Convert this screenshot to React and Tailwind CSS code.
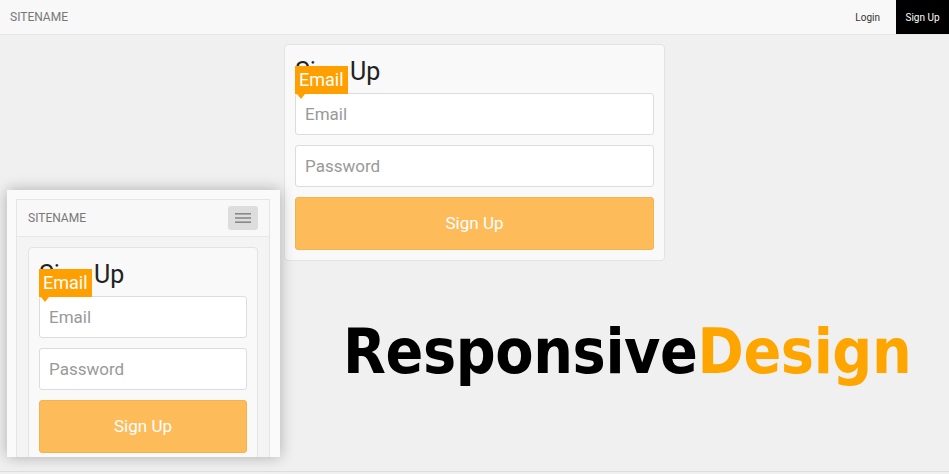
import { useState } from "react";

function Tooltip({ label }) {
  return (
    <div className="absolute left-0 top-[-27px] z-10 h-[28px] bg-[#ffa000] px-[4px] text-[18px] leading-[28px] text-white">
      {label}
      <span className="absolute left-[2px] top-full h-0 w-0 border-x-[4px] border-t-[5px] border-x-transparent border-t-[#ffa000]" />
    </div>
  );
}

function SignUpForm() {
  const [email, setEmail] = useState("");
  const [password, setPassword] = useState("");

  return (
    <div className="rounded-[4px] border border-[#e3e3e3] bg-[#f9f9f9] px-[10px] pb-[10px] pt-[11px]">
      <h1 className="mb-[5px] text-[25px] leading-[32px] text-[#222]">Sign Up</h1>
      <div className="relative">
        <Tooltip label="Email" />
        <input
          value={email}
          onChange={(e) => setEmail(e.target.value)}
          placeholder="Email"
          className="block h-[42px] w-full rounded-[3px] border border-[#dcdcdc] bg-white px-[9px] text-[17px] text-[#555] outline-none placeholder:text-[#999]"
        />
      </div>
      <input
        type="password"
        value={password}
        onChange={(e) => setPassword(e.target.value)}
        placeholder="Password"
        className="mt-[10px] block h-[42px] w-full rounded-[3px] border border-[#dcdcdc] bg-white px-[9px] text-[17px] text-[#555] outline-none placeholder:text-[#999]"
      />
      <button className="mt-[10px] block h-[53px] w-full rounded-[3px] border border-[#f5b24e] bg-[#fdbb5a] text-[17px] text-white">
        Sign Up
      </button>
    </div>
  );
}

function HamburgerIcon() {
  return (
    <svg width="16" height="12" viewBox="0 0 16 12">
      <rect x="0" y="1" width="16" height="1.6" fill="#888" />
      <rect x="0" y="5.2" width="16" height="1.6" fill="#888" />
      <rect x="0" y="9.4" width="16" height="1.6" fill="#888" />
    </svg>
  );
}

export default function App() {
  return (
    <div className="relative h-[474px] w-[949px] overflow-hidden bg-[#f0f0f0] font-['Roboto',sans-serif]">
      <div className="h-[472px] border-b border-[#dedede]">
        {/* desktop navbar */}
        <nav className="flex h-[35px] items-center border-b border-[#e7e7e7] bg-[#f8f8f8]">
          <span className="pl-[10px] text-[12px] text-[#777]">SITENAME</span>
          <div className="ml-auto flex h-full items-center">
            <a className="px-[16px] text-[10px] text-[#333]">Login</a>
            <a className="flex h-full w-[53px] items-center justify-center bg-black text-[10px] text-white">
              Sign Up
            </a>
          </div>
        </nav>

        <div className="mx-auto mt-[9px] w-[381px]">
          <SignUpForm />
        </div>
      </div>

      {/* mobile preview */}
      <div className="absolute left-[7px] top-[190px] h-[267px] w-[273px] bg-[#fafafa] pl-[9px] pr-[10px] pt-[9px] shadow-[0_0_14px_rgba(0,0,0,0.28)]">
        <div className="h-full overflow-hidden border-x border-t border-[#e5e5e5] bg-[#f4f4f4]">
          <div className="flex h-[37px] items-center justify-between border-b border-[#e7e7e7] bg-[#f8f8f8] pl-[11px] pr-[11px]">
            <span className="text-[12px] text-[#777]">SITENAME</span>
            <button className="flex h-[24px] w-[30px] items-center justify-center rounded-[3px] bg-[#ddd]">
              <HamburgerIcon />
            </button>
          </div>
          <div className="px-[11px] pt-[10px]">
            <SignUpForm />
          </div>
        </div>
      </div>

      <div className="absolute left-[343px] top-[321px] text-[62px] font-bold leading-none tracking-[-0.4px] text-black font-['DejaVu_Sans_Condensed','Liberation_Sans',sans-serif]">
        Responsive<span className="text-[#ffa500]">Design</span>
      </div>
    </div>
  );
}
